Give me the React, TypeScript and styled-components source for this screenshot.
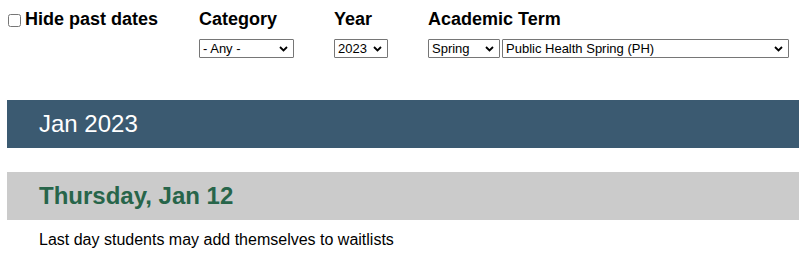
import React from 'react';
import styled, { createGlobalStyle } from 'styled-components';

const GlobalStyle = createGlobalStyle`
  body {
    margin: 0;
    font-family: "Liberation Sans", Arial, sans-serif;
    background: #fff;
    color: #000;
  }
`;

type Option = { value: string; label: string };

type DropdownProps = {
  width: number;
  options: Option[];
  value: string;
};

const Dropdown = (props: DropdownProps) => {
  return (
    <SelectBox $width={props.width}>
      <Select defaultValue={props.value}>
        {props.options.map((o) => (
          <option key={o.value} value={o.value}>
            {o.label}
          </option>
        ))}
      </Select>
      <Chevron width="9" height="6" viewBox="0 0 9 6">
        <path d="M1 1 L4.5 4.5 L8 1" fill="none" stroke="#000" strokeWidth="1.8" />
      </Chevron>
    </SelectBox>
  );
};

export default function App() {
  return (
    <>
      <GlobalStyle />
      <Page>
        <Filters>
          <HideGroup>
            <Checkbox type="checkbox" id="hide-past" />
            <Label htmlFor="hide-past">Hide past dates</Label>
          </HideGroup>
          <Field>
            <Label as="div">Category</Label>
            <Dropdown width={95} value="any" options={[{ value: 'any', label: '- Any -' }]} />
          </Field>
          <Field>
            <Label as="div">Year</Label>
            <Dropdown width={54} value="2023" options={[{ value: '2023', label: '2023' }]} />
          </Field>
          <Field>
            <Label as="div">Academic Term</Label>
            <SelectRow>
              <Dropdown width={72} value="spring" options={[{ value: 'spring', label: 'Spring' }]} />
              <Dropdown
                width={287}
                value="ph"
                options={[{ value: 'ph', label: 'Public Health Spring (PH)' }]}
              />
            </SelectRow>
          </Field>
        </Filters>

        <MonthBar>Jan 2023</MonthBar>

        <DayBar>Thursday, Jan 12</DayBar>
        <Event>Last day students may add themselves to waitlists</Event>
      </Page>
    </>
  );
}

const Page = styled.div`
  padding-left: 7px;
`;

const Filters = styled.div`
  display: flex;
  align-items: flex-start;
  gap: 40px;
  padding: 9px 0 0 1px;
  height: 100px;
  box-sizing: border-box;
`;

const HideGroup = styled.div`
  display: flex;
  align-items: center;
  width: 151px;
`;

const Checkbox = styled.input`
  width: 13px;
  height: 13px;
  margin: 1px 4px 0 0;
`;

const Label = styled.label`
  font-size: 18px;
  font-weight: bold;
  line-height: 21px;
`;

const Field = styled.div`
  display: flex;
  flex-direction: column;
  gap: 9px;
`;

const SelectRow = styled.div`
  display: flex;
  gap: 2px;
`;

const SelectBox = styled.div<{ $width: number }>`
  position: relative;
  width: ${(p) => p.$width}px;
  height: 19px;
`;

const Select = styled.select`
  appearance: none;
  width: 100%;
  height: 100%;
  box-sizing: border-box;
  border: 1px solid #767676;
  border-radius: 1px;
  background: #fff;
  padding: 0 18px 0 3px;
  font-family: "Liberation Sans", Arial, sans-serif;
  font-size: 13px;
  color: #000;
`;

const Chevron = styled.svg`
  position: absolute;
  right: 6px;
  top: 7px;
  pointer-events: none;
`;

const MonthBar = styled.div`
  background: #3b5a71;
  color: #fff;
  height: 48px;
  display: flex;
  align-items: center;
  padding-left: 32px;
  font-size: 24px;
`;

const DayBar = styled.div`
  background: #cbcbcb;
  color: #27654a;
  height: 48px;
  margin-top: 24px;
  display: flex;
  align-items: center;
  padding-left: 32px;
  font-size: 24px;
  font-weight: bold;
`;

const Event = styled.p`
  margin: 0;
  padding: 11px 0 0 32px;
  font-size: 16px;
`;
